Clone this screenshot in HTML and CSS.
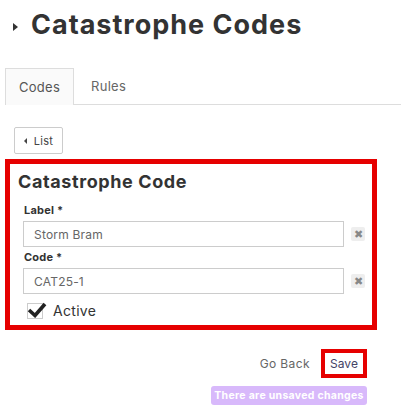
FILE: index.html
```html
<!DOCTYPE html>
<html>
<head>
<meta charset="utf-8">
<link rel="stylesheet" href="styles.css">
</head>
<body>
<div class="page">
  <h1 class="title"><span class="caret"></span>Catastrophe Codes</h1>
  <div class="tabs">
    <div class="tab active">Codes</div>
    <div class="tab">Rules</div>
  </div>
  <div class="toolbar">
    <button class="btn-list"><span class="caret-left"></span>List</button>
  </div>
  <div class="card">
    <h2 class="card-title">Catastrophe Code</h2>
    <div class="field">
      <label class="label">Label *</label>
      <div class="row">
        <div class="input">Storm Bram</div>
        <span class="clear">&#x2716;</span>
      </div>
    </div>
    <div class="field">
      <label class="label">Code *</label>
      <div class="row">
        <div class="input">CAT25-1</div>
        <span class="clear">&#x2716;</span>
      </div>
    </div>
    <div class="check">
      <span class="box">
        <svg class="tick" viewBox="0 0 20 16" width="20" height="16"><path d="M2 8 L8 13.5 L18 2" fill="none" stroke="#222" stroke-width="3.6" stroke-linecap="butt" stroke-linejoin="miter"/></svg>
      </span>
      <span class="check-text">Active</span>
    </div>
  </div>
  <div class="footer">
    <div class="actions">
      <span class="go-back">Go Back</span>
      <span class="save">Save</span>
    </div>
    <div class="badge">There are unsaved changes</div>
  </div>
</div>
</body>
</html>
```
FILE: styles.css
```css
html, body { margin: 0; padding: 0; background: #fff; }
body { font-family: "Inter", "Open Sans", sans-serif; color: #333; }
.page { width: 401px; }
.title {
  margin: 0;
  padding: 9px 0 0 13px;
  display: flex;
  align-items: center;
  gap: 13px;
  font-size: 27px;
  font-weight: 700;
  line-height: 32px;
  color: #333;
  letter-spacing: 1px;
}
.caret {
  width: 0; height: 0;
  border-top: 4px solid transparent;
  border-bottom: 4px solid transparent;
  border-left: 5px solid #333;
  margin-top: 4px;
}
.tabs {
  display: flex;
  margin: 27px 0 0 5px;
  border-bottom: 1px solid #ddd;
}
.tab {
  height: 36px;
  box-sizing: border-box;
  padding: 0 15px 0 16px;
  display: flex;
  align-items: center;
  font-size: 13px;
  color: #666;
  letter-spacing: 0.3px;
}
.tab.active {
  width: 69px;
  justify-content: center;
  padding: 0;
  border: 1px solid #ddd;
  border-bottom: none;
  background: #fafafa;
  margin-bottom: -1px;
  height: 37px;
  color: #555;
}
.tab + .tab { padding-left: 17px; }
.toolbar { padding: 22px 0 0 14px; }
.btn-list {
  width: 49px; height: 27px;
  box-sizing: border-box;
  border: 1px solid #ccc;
  border-radius: 2px;
  background: #fff;
  font-family: inherit;
  font-size: 11px;
  color: #444;
  display: flex;
  align-items: center;
  justify-content: center;
  gap: 7px;
  padding: 0;
  letter-spacing: 0.3px;
}
.caret-left {
  width: 0; height: 0;
  border-top: 3px solid transparent;
  border-bottom: 3px solid transparent;
  border-right: 3px solid #444;
}
.card {
  margin: 5px 0 0 5px;
  width: 372px;
  box-sizing: border-box;
  border: 5px solid #e60000;
  padding: 5px 7px 6px 13px;
}
.card-title {
  margin: 0 0 0 -5px;
  font-size: 18px;
  font-weight: 700;
  line-height: 26px;
  color: #333;
  letter-spacing: 0.6px;
}
.field { margin-top: 8px; }
.field + .field { margin-top: 3px; }
.label {
  display: block;
  font-size: 11px;
  font-weight: 700;
  line-height: 14px;
  color: #333;
  padding-left: 1px;
  letter-spacing: 0.2px;
}
.row {
  display: flex;
  align-items: center;
  gap: 7px;
  margin-top: 4px;
}
.input {
  width: 321px;
  height: 26px;
  box-sizing: border-box;
  border: 1px solid #ccc;
  padding: 0 10px;
  display: flex;
  align-items: center;
  font-size: 12px;
  color: #666;
  letter-spacing: 0.2px;
}
.clear {
  width: 14px; height: 14px;
  background: #eee;
  border-radius: 2px;
  color: #888;
  font-size: 11px;
  display: flex;
  align-items: center;
  justify-content: center;
  line-height: 1;
}
.check {
  display: flex;
  align-items: center;
  gap: 10px;
  margin-top: 8px;
  padding-left: 4px;
}
.box {
  position: relative;
  width: 16px; height: 16px;
  box-sizing: border-box;
  border: 1px solid #ccc;
}
.tick { position: absolute; left: -1px; top: -2px; }
.check-text { font-size: 14px; color: #333; letter-spacing: 0.3px; }
.footer {
  width: 377px;
  box-sizing: border-box;
  padding: 19px 10px 0 0;
  display: flex;
  flex-direction: column;
  align-items: flex-end;
  gap: 8px;
}
.actions { display: flex; align-items: center; gap: 11px; }
.go-back { font-size: 12px; color: #666; letter-spacing: 0.4px; }
.save {
  width: 46px; height: 29px;
  box-sizing: border-box;
  border: 4px solid #e60000;
  display: flex;
  align-items: center;
  justify-content: center;
  font-size: 12px;
  color: #446;
}
.badge {
  width: 156px;
  height: 19px;
  box-sizing: border-box;
  background: #d8b9fb;
  border-radius: 3px;
  color: #fff;
  font-size: 10.5px;
  font-weight: 700;
  letter-spacing: 0.3px;
  display: flex;
  align-items: center;
  justify-content: center;
}
```
